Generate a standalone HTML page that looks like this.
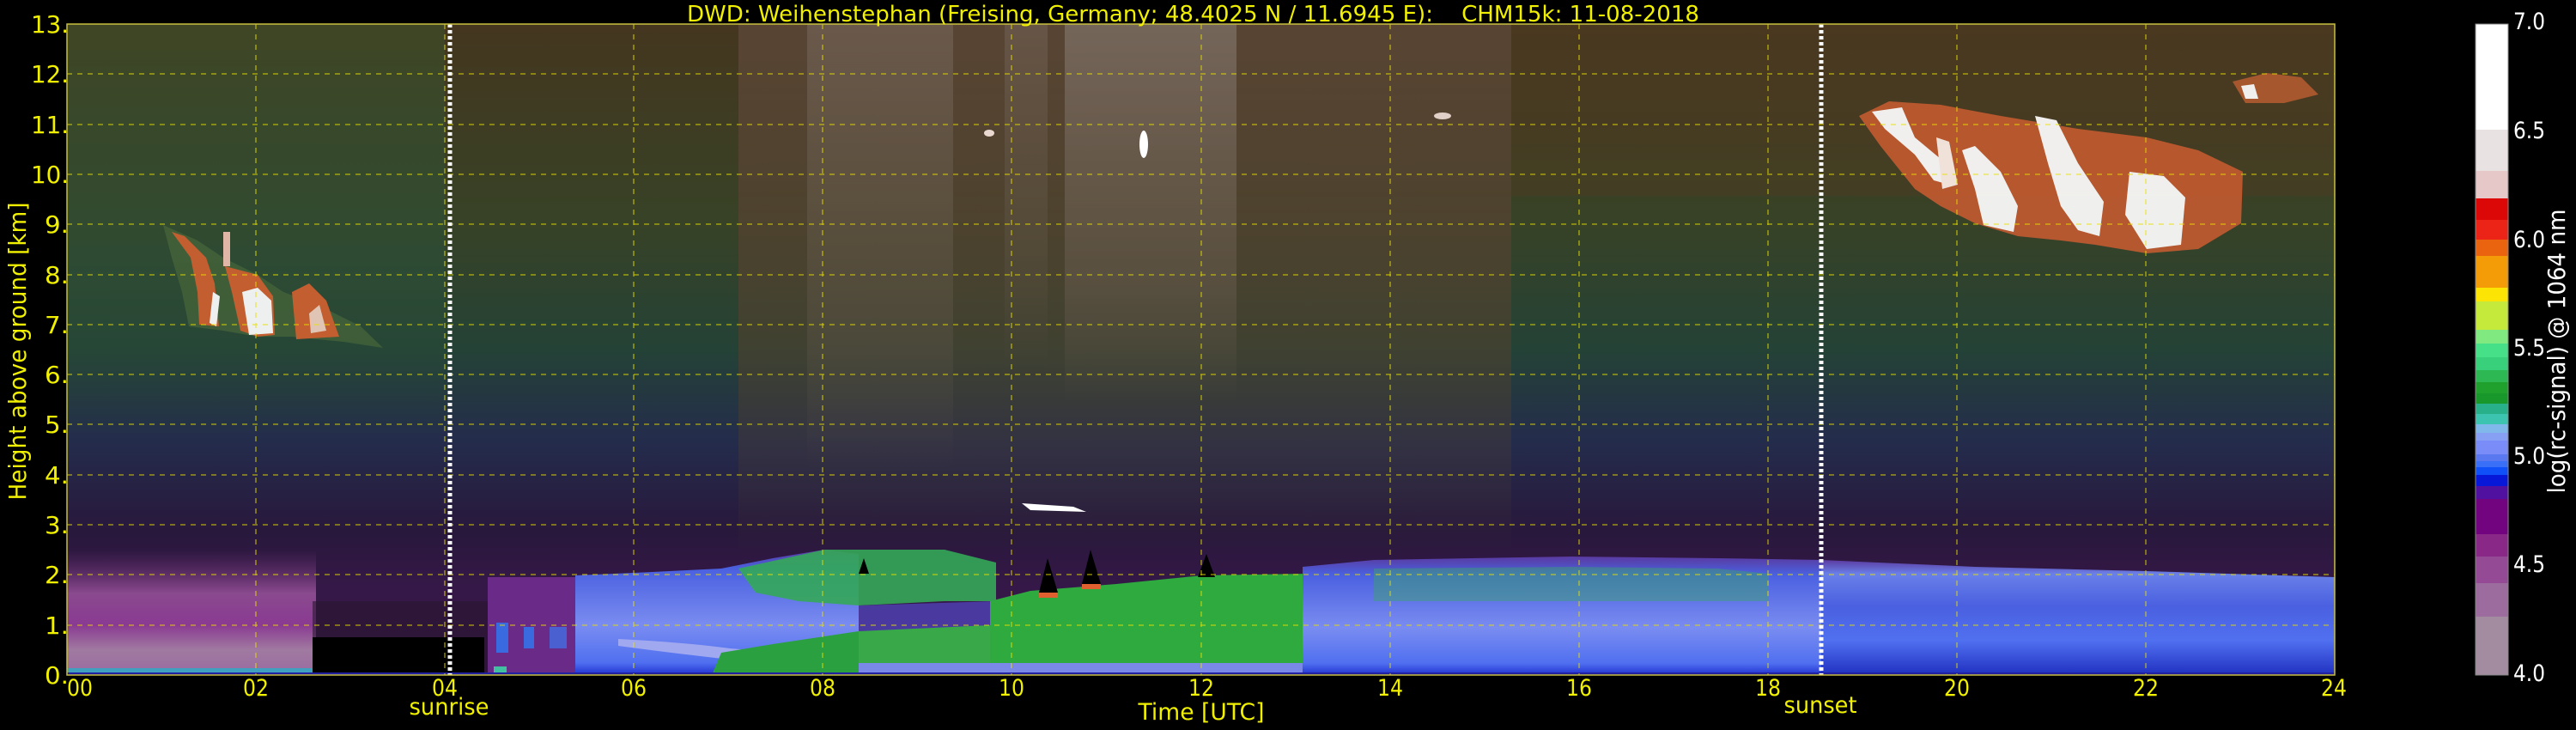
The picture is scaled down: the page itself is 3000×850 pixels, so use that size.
<!DOCTYPE html>
<html><head><meta charset="utf-8"><style>
html,body{margin:0;padding:0;background:#000;}
svg{display:block;}
text{font-family:"DejaVu Sans","Liberation Sans",sans-serif;white-space:pre;}
</style></head><body>
<svg width="3000" height="850" viewBox="0 0 3000 850" xmlns="http://www.w3.org/2000/svg">
<defs>
<linearGradient id="bg" x1="0" y1="0" x2="0" y2="1">
<stop offset="0" stop-color="#44361f"/>
<stop offset="0.3" stop-color="#384226"/>
<stop offset="0.5" stop-color="#244236"/>
<stop offset="0.64" stop-color="#242c4c"/>
<stop offset="0.78" stop-color="#28183c"/>
<stop offset="0.87" stop-color="#361848"/>
<stop offset="1" stop-color="#361848"/>
</linearGradient>
<linearGradient id="leftg" x1="0" y1="0" x2="0" y2="1">
<stop offset="0" stop-color="#3e4a26" stop-opacity="0.8"/>
<stop offset="0.6" stop-color="#2a5038" stop-opacity="0.6"/>
<stop offset="1" stop-color="#2a5038" stop-opacity="0"/>
</linearGradient>
<linearGradient id="midg" x1="0" y1="0" x2="0" y2="1">
<stop offset="0" stop-color="#5e4838" stop-opacity="0.8"/>
<stop offset="0.6" stop-color="#52402e" stop-opacity="0.6"/>
<stop offset="1" stop-color="#52402e" stop-opacity="0"/>
</linearGradient>
<linearGradient id="streak" x1="0" y1="0" x2="0" y2="1">
<stop offset="0" stop-color="#8a8078" stop-opacity="0.7"/>
<stop offset="0.7" stop-color="#7a6a60" stop-opacity="0.4"/>
<stop offset="1" stop-color="#7a6a60" stop-opacity="0"/>
</linearGradient>
<linearGradient id="pinkg" x1="0" y1="0" x2="0" y2="1">
<stop offset="0" stop-color="#6a3070" stop-opacity="0"/>
<stop offset="0.35" stop-color="#8a4a8e"/>
<stop offset="0.6" stop-color="#8a3a92"/>
<stop offset="0.8" stop-color="#a07aa0"/>
<stop offset="1" stop-color="#9a6aa0"/>
</linearGradient>
<linearGradient id="blueg" x1="0" y1="0" x2="0" y2="1">
<stop offset="0" stop-color="#5a3aa0"/>
<stop offset="0.15" stop-color="#4a60e0"/>
<stop offset="0.6" stop-color="#7a8cf0"/>
<stop offset="0.9" stop-color="#5070f0"/>
<stop offset="1" stop-color="#2030d0"/>
</linearGradient>
<linearGradient id="blueg2" x1="0" y1="0" x2="0" y2="1">
<stop offset="0" stop-color="#5a3aa0"/>
<stop offset="0.12" stop-color="#6a80e8"/>
<stop offset="0.4" stop-color="#4a60e0"/>
<stop offset="0.7" stop-color="#5070f0"/>
<stop offset="1" stop-color="#2030c0"/>
</linearGradient>
</defs>

<rect x="78" y="28" width="2641" height="758" fill="url(#bg)"/>
<rect x="78" y="28" width="440" height="480" fill="url(#leftg)"/>
<rect x="860" y="28" width="900" height="620" fill="url(#midg)"/>
<rect x="1760" y="28" width="959" height="200" fill="#5a3a22" opacity="0.3"/>
<rect x="940" y="28" width="170" height="520" fill="url(#streak)" opacity="0.5"/>
<rect x="1240" y="28" width="200" height="440" fill="url(#streak)" opacity="0.8"/>
<rect x="1170" y="28" width="50" height="400" fill="url(#streak)" opacity="0.4"/>

<g opacity="0.92">
<polygon points="190,262 230,280 260,300 300,320 330,340 370,355 420,380 446,405 400,398 340,392 300,392 260,385 220,380 212,340 200,300" fill="#4a6a3a" opacity="0.7"/>
<polygon points="200,270 222,300 230,340 232,378 255,380 250,330 240,300 215,275" fill="#d06030"/>
<polygon points="262,310 270,340 280,385 300,392 320,390 318,345 300,320" fill="#d06030"/>
<polygon points="282,340 300,335 316,350 318,388 290,390" fill="#ffffff"/>
<polygon points="340,340 360,330 380,350 395,392 345,395" fill="#d06030"/>
<polygon points="360,365 372,355 380,385 362,388" fill="#f0d0c0"/>
<polygon points="248,340 256,345 252,380 244,376" fill="#ffffff"/>
<rect x="260" y="270" width="8" height="40" fill="#f0c0b0"/>
</g>

<g opacity="0.92">
<polygon points="2165,135 2200,118 2260,122 2330,135 2420,150 2500,160 2560,175 2612,200 2610,260 2560,290 2500,295 2440,285 2400,280 2350,275 2300,260 2260,240 2230,220 2190,170" fill="#c05a30"/>
<polygon points="2180,130 2215,125 2230,160 2260,185 2270,215 2252,210 2230,180 2195,150" fill="#ffffff"/>
<polygon points="2285,175 2300,170 2330,200 2350,240 2345,270 2310,262 2300,220" fill="#ffffff"/>
<polygon points="2370,135 2395,140 2420,190 2450,235 2445,275 2420,268 2400,240 2385,190" fill="#ffffff"/>
<polygon points="2480,200 2520,205 2545,230 2540,285 2500,290 2475,250" fill="#ffffff"/>
<polygon points="2255,160 2270,165 2280,215 2262,220" fill="#fff0e8"/>
<polygon points="2600,95 2640,85 2680,90 2700,110 2660,120 2615,120" fill="#b05a30"/>
<polygon points="2610,100 2625,98 2630,115 2615,115" fill="#ffffff"/>
</g>
<ellipse cx="1332" cy="168" rx="5" ry="16" fill="#ffffff"/>
<ellipse cx="1152" cy="155" rx="6" ry="4" fill="#e8d8d0"/>
<ellipse cx="1680" cy="135" rx="10" ry="4" fill="#e0d0c8"/>
<polygon points="1190,586 1250,590 1265,596 1200,594" fill="#ffffff"/>

<rect x="78" y="640" width="290" height="146" fill="url(#pinkg)"/>
<rect x="78" y="778" width="290" height="6" fill="#40a0c0"/>
<rect x="364" y="700" width="204" height="86" fill="#2a1530" opacity="0.6"/>
<rect x="364" y="742" width="200" height="44" fill="#000"/>
<rect x="568" y="672" width="102" height="114" fill="#6a2a88"/>
<rect x="578" y="725" width="14" height="35" fill="#3a6ae0"/>
<rect x="610" y="730" width="12" height="25" fill="#3a6ae0"/>
<rect x="640" y="730" width="20" height="25" fill="#4a60d0"/>
<rect x="575" y="776" width="15" height="8" fill="#40c0a0"/>
<path d="M670,670 L760,666 L840,662 L900,650 L960,640 L1000,645 L1000,786 L670,786 Z" fill="url(#blueg)"/>
<path d="M720,744 Q800,748 850,755 Q900,760 960,745 L1000,742 L1000,750 Q920,772 850,768 Q780,760 720,752 Z" fill="#a0a8f0"/>
<path d="M829,786 L840,760 L900,750 L1000,735 L1000,786 Z" fill="#2aa040"/>
<path d="M860,662 L960,640 L1000,640 L1100,640 L1160,655 L1160,700 L1100,700 L1000,705 L930,700 L880,690 Z" fill="#34a858" opacity="0.9"/>
<path d="M1000,705 L1160,700 L1153,730 L1000,735 Z" fill="#4a3aa0"/>
<path d="M1000,735 L1153,728 L1153,786 L1000,786 Z" fill="#38a848"/>
<path d="M1153,700 L1200,688 L1300,680 L1400,670 L1520,668 L1517,786 L1153,786 Z" fill="#2eaa3e"/>
<rect x="1000" y="772" width="520" height="14" fill="#7a88e8"/>
<path d="M1517,660 L1600,652 L1830,648 L2000,650 L2121,652 L2121,786 L1517,786 Z" fill="url(#blueg)"/>
<path d="M1600,662 L1830,660 L2000,662 L2060,668 L2060,700 L1600,700 Z" fill="#3aa070" opacity="0.5"/>
<path d="M2121,652 L2300,660 L2500,665 L2719,672 L2719,786 L2121,786 Z" fill="url(#blueg2)"/>
<rect x="78" y="783" width="2641" height="3" fill="#2020a0"/>
<g fill="#000">
<polygon points="1210,690 1220,650 1232,690"/>
<polygon points="1260,680 1270,640 1282,680"/>
<polygon points="1395,672 1405,645 1415,672"/>
<polygon points="1000,668 1006,650 1012,668"/>
</g>
<g fill="#e06030">
<rect x="1210" y="690" width="22" height="6"/>
<rect x="1260" y="680" width="22" height="6"/>
</g>

<g stroke="#e8e000" stroke-width="1" stroke-dasharray="6,6" fill="none" opacity="0.9">
<line x1="78" y1="728" x2="2719" y2="728"/>
<line x1="78" y1="669" x2="2719" y2="669"/>
<line x1="78" y1="611" x2="2719" y2="611"/>
<line x1="78" y1="553" x2="2719" y2="553"/>
<line x1="78" y1="494" x2="2719" y2="494"/>
<line x1="78" y1="436" x2="2719" y2="436"/>
<line x1="78" y1="378" x2="2719" y2="378"/>
<line x1="78" y1="320" x2="2719" y2="320"/>
<line x1="78" y1="261" x2="2719" y2="261"/>
<line x1="78" y1="203" x2="2719" y2="203"/>
<line x1="78" y1="145" x2="2719" y2="145"/>
<line x1="78" y1="86" x2="2719" y2="86"/>
<line x1="298" y1="28" x2="298" y2="786"/>
<line x1="518" y1="28" x2="518" y2="786"/>
<line x1="738" y1="28" x2="738" y2="786"/>
<line x1="958" y1="28" x2="958" y2="786"/>
<line x1="1178" y1="28" x2="1178" y2="786"/>
<line x1="1399" y1="28" x2="1399" y2="786"/>
<line x1="1619" y1="28" x2="1619" y2="786"/>
<line x1="1839" y1="28" x2="1839" y2="786"/>
<line x1="2059" y1="28" x2="2059" y2="786"/>
<line x1="2279" y1="28" x2="2279" y2="786"/>
<line x1="2499" y1="28" x2="2499" y2="786"/>
</g>
<g stroke="#ffffff" stroke-width="5" stroke-dasharray="4,3">
<line x1="524" y1="28" x2="524" y2="786"/>
<line x1="2121" y1="28" x2="2121" y2="786"/>
</g>
<rect x="78" y="28" width="2641" height="758" fill="none" stroke="#c8c040" stroke-width="1.5"/>

<text x="800" y="25" font-size="26" fill="#f0f000" textLength="1179" lengthAdjust="spacingAndGlyphs" xml:space="preserve">DWD: Weihenstephan (Freising, Germany; 48.4025 N / 11.6945 E):&#160;&#160;&#160;&#160;CHM15k: 11-08-2018</text>

<g font-size="28" fill="#f0f000" text-anchor="end">
<text x="80" y="38" textLength="44" lengthAdjust="spacingAndGlyphs">13.</text>
<text x="80" y="96" textLength="44" lengthAdjust="spacingAndGlyphs">12.</text>
<text x="80" y="155" textLength="44" lengthAdjust="spacingAndGlyphs">11.</text>
<text x="80" y="213" textLength="44" lengthAdjust="spacingAndGlyphs">10.</text>
<text x="80" y="271" textLength="28" lengthAdjust="spacingAndGlyphs">9.</text>
<text x="80" y="330" textLength="28" lengthAdjust="spacingAndGlyphs">8.</text>
<text x="80" y="388" textLength="28" lengthAdjust="spacingAndGlyphs">7.</text>
<text x="80" y="446" textLength="28" lengthAdjust="spacingAndGlyphs">6.</text>
<text x="80" y="504" textLength="28" lengthAdjust="spacingAndGlyphs">5.</text>
<text x="80" y="563" textLength="28" lengthAdjust="spacingAndGlyphs">4.</text>
<text x="80" y="621" textLength="28" lengthAdjust="spacingAndGlyphs">3.</text>
<text x="80" y="679" textLength="28" lengthAdjust="spacingAndGlyphs">2.</text>
<text x="80" y="738" textLength="28" lengthAdjust="spacingAndGlyphs">1.</text>
<text x="80" y="796" textLength="28" lengthAdjust="spacingAndGlyphs">0.</text>
</g>
<text transform="translate(30,409) rotate(-90)" font-size="28" fill="#f0f000" text-anchor="middle" textLength="347" lengthAdjust="spacingAndGlyphs">Height above ground [km]</text>

<g font-size="27" fill="#f0f000" text-anchor="middle">
<text x="93" y="810" textLength="30" lengthAdjust="spacingAndGlyphs">00</text>
<text x="298" y="810" textLength="30" lengthAdjust="spacingAndGlyphs">02</text>
<text x="518" y="810" textLength="30" lengthAdjust="spacingAndGlyphs">04</text>
<text x="738" y="810" textLength="30" lengthAdjust="spacingAndGlyphs">06</text>
<text x="958" y="810" textLength="30" lengthAdjust="spacingAndGlyphs">08</text>
<text x="1178" y="810" textLength="30" lengthAdjust="spacingAndGlyphs">10</text>
<text x="1399" y="810" textLength="30" lengthAdjust="spacingAndGlyphs">12</text>
<text x="1619" y="810" textLength="30" lengthAdjust="spacingAndGlyphs">14</text>
<text x="1839" y="810" textLength="30" lengthAdjust="spacingAndGlyphs">16</text>
<text x="2059" y="810" textLength="30" lengthAdjust="spacingAndGlyphs">18</text>
<text x="2279" y="810" textLength="30" lengthAdjust="spacingAndGlyphs">20</text>
<text x="2499" y="810" textLength="30" lengthAdjust="spacingAndGlyphs">22</text>
<text x="2718" y="810" textLength="30" lengthAdjust="spacingAndGlyphs">24</text>
<text x="523" y="832" textLength="93" lengthAdjust="spacingAndGlyphs">sunrise</text>
<text x="2120" y="830" textLength="85" lengthAdjust="spacingAndGlyphs">sunset</text>
<text x="1399" y="838" textLength="147" lengthAdjust="spacingAndGlyphs">Time [UTC]</text>
</g>

<g>
<rect x="2883" y="28" width="38" height="123" fill="#ffffff"/>
<rect x="2883" y="151" width="38" height="48" fill="#e8e2e2"/>
<rect x="2883" y="199" width="38" height="32" fill="#e6c8c8"/>
<rect x="2883" y="231" width="38" height="25" fill="#dc0808"/>
<rect x="2883" y="256" width="38" height="23" fill="#ec2418"/>
<rect x="2883" y="279" width="38" height="19" fill="#ea6410"/>
<rect x="2883" y="298" width="38" height="37" fill="#f49c08"/>
<rect x="2883" y="335" width="38" height="16" fill="#fce404"/>
<rect x="2883" y="351" width="38" height="33" fill="#c6ea3c"/>
<rect x="2883" y="384" width="38" height="16" fill="#80ea80"/>
<rect x="2883" y="400" width="38" height="16" fill="#46e088"/>
<rect x="2883" y="416" width="38" height="15" fill="#38d07a"/>
<rect x="2883" y="431" width="38" height="14" fill="#2eb854"/>
<rect x="2883" y="445" width="38" height="13" fill="#20a02c"/>
<rect x="2883" y="458" width="38" height="12" fill="#18982a"/>
<rect x="2883" y="470" width="38" height="12" fill="#28b08a"/>
<rect x="2883" y="482" width="38" height="12" fill="#3cc4b0"/>
<rect x="2883" y="494" width="38" height="10" fill="#80b8ec"/>
<rect x="2883" y="504" width="38" height="9" fill="#88a0f4"/>
<rect x="2883" y="513" width="38" height="16" fill="#7a8cf8"/>
<rect x="2883" y="529" width="38" height="8" fill="#5a78f0"/>
<rect x="2883" y="537" width="38" height="7" fill="#3a70f8"/>
<rect x="2883" y="544" width="38" height="9" fill="#1050f8"/>
<rect x="2883" y="553" width="38" height="13" fill="#0818d8"/>
<rect x="2883" y="566" width="38" height="15" fill="#5010a0"/>
<rect x="2883" y="581" width="38" height="41" fill="#720480"/>
<rect x="2883" y="622" width="38" height="26" fill="#8a2888"/>
<rect x="2883" y="648" width="38" height="31" fill="#944a94"/>
<rect x="2883" y="679" width="38" height="39" fill="#9c6c9e"/>
<rect x="2883" y="718" width="38" height="68" fill="#a48ca0"/>
<rect x="2883" y="28" width="38" height="758" fill="none" stroke="#888" stroke-width="1"/>
</g>
<g font-size="27" fill="#ffffff">
<text x="2927" y="34" textLength="37" lengthAdjust="spacingAndGlyphs">7.0</text>
<text x="2927" y="161" textLength="37" lengthAdjust="spacingAndGlyphs">6.5</text>
<text x="2927" y="288" textLength="37" lengthAdjust="spacingAndGlyphs">6.0</text>
<text x="2927" y="414" textLength="37" lengthAdjust="spacingAndGlyphs">5.5</text>
<text x="2927" y="540" textLength="37" lengthAdjust="spacingAndGlyphs">5.0</text>
<text x="2927" y="666" textLength="37" lengthAdjust="spacingAndGlyphs">4.5</text>
<text x="2927" y="793" textLength="37" lengthAdjust="spacingAndGlyphs">4.0</text>
</g>
<text transform="translate(2987,409) rotate(-90)" font-size="28" fill="#ffffff" text-anchor="middle" textLength="331" lengthAdjust="spacingAndGlyphs">log(rc-signal) @ 1064 nm</text>
</svg>
</body></html>
